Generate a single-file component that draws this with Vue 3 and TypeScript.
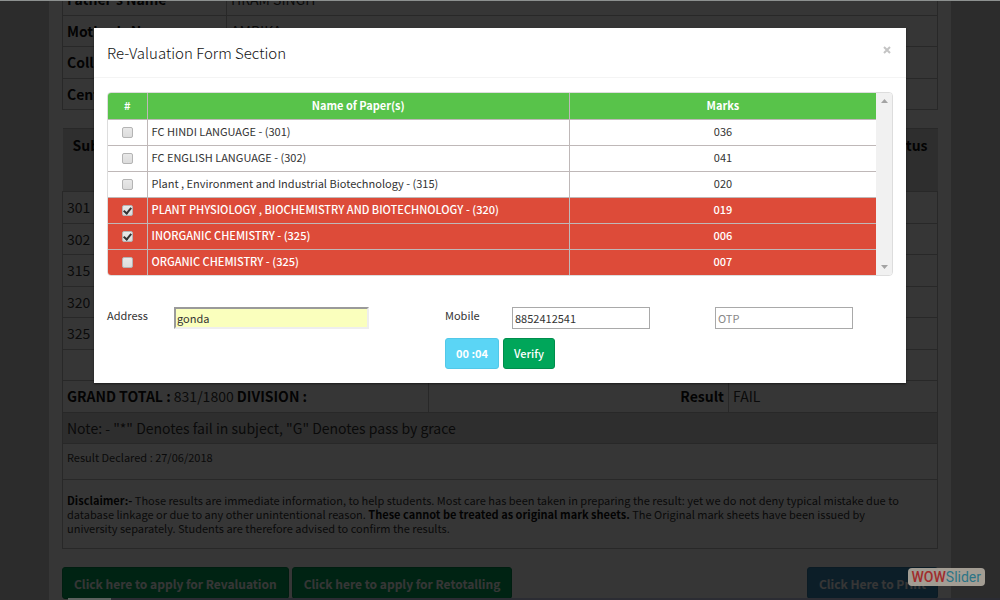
<script setup lang="ts">
import { reactive, ref } from 'vue'

interface Paper {
  name: string
  code: string
  marks: string
  failed: boolean
  picked: boolean
}

const details = [
  { label: "Father's Name", value: 'HRAM SINGH' },
  { label: "Mother's Name", value: 'AMBIKA' },
  { label: 'College Name', value: '' },
  { label: 'Center Name', value: '' },
]

const subjects = ['301', '302', '315', '320', '325', '']

const papers = reactive<Paper[]>([
  { name: 'FC HINDI LANGUAGE', code: '301', marks: '036', failed: false, picked: false },
  { name: 'FC ENGLISH LANGUAGE', code: '302', marks: '041', failed: false, picked: false },
  { name: 'Plant , Environment and Industrial Biotechnology', code: '315', marks: '020', failed: false, picked: false },
  { name: 'PLANT PHYSIOLOGY , BIOCHEMISTRY AND BIOTECHNOLOGY', code: '320', marks: '019', failed: true, picked: true },
  { name: 'INORGANIC CHEMISTRY', code: '325', marks: '006', failed: true, picked: true },
  { name: 'ORGANIC CHEMISTRY', code: '325', marks: '007', failed: true, picked: false },
])

const address = ref('gonda')
const mobile = ref('8852412541')
const otp = ref('')
</script>

<template>
  <div class="screen">
    <main class="page">
      <table class="sheet details">
        <tbody>
          <tr v-for="d in details" :key="d.label">
            <th scope="row">{{ d.label }}</th>
            <td>{{ d.value }}</td>
          </tr>
        </tbody>
      </table>

      <table class="sheet marks">
        <thead>
          <tr>
            <th class="subject">Subject</th>
            <th></th>
            <th></th>
            <th class="status">Status</th>
          </tr>
        </thead>
        <tbody>
          <tr v-for="(s, i) in subjects" :key="i">
            <td colspan="4">{{ s }}</td>
          </tr>
          <tr>
            <td colspan="2"><b>GRAND TOTAL :</b> 831/1800 <b>DIVISION :</b></td>
            <td class="right"><b>Result</b></td>
            <td>FAIL</td>
          </tr>
          <tr class="shade">
            <td colspan="4">Note: - "*" Denotes fail in subject, "G" Denotes pass by grace</td>
          </tr>
          <tr>
            <td colspan="4" class="declared">Result Declared : 27/06/2018</td>
          </tr>
          <tr>
            <td colspan="4" class="disclaimer">
              <b>Disclaimer:-</b> Those results are immediate information, to help students. Most care has been taken in
              preparing the result: yet we do not deny typical mistake due to database linkage or due to any other
              unintentional reason. <b>These cannot be treated as original mark sheets.</b> The Original mark sheets
              have been issued by university separately. Students are therefore advised to confirm the results.
            </td>
          </tr>
        </tbody>
      </table>

      <div class="actions">
        <button type="button" class="big green">Click here to apply for Revaluation</button>
        <button type="button" class="big green">Click here to apply for Retotalling</button>
        <button type="button" class="big blue">Click Here to Print</button>
      </div>
    </main>

    <div class="backdrop">
      <section class="modal" role="dialog" aria-labelledby="modal-title">
        <header class="modal-head">
          <h4 id="modal-title">Re-Valuation Form Section</h4>
          <button type="button" class="close" aria-label="Close">
            <svg viewBox="0 0 8 8" width="8" height="8"><path d="M1 1L7 7M7 1L1 7" /></svg>
          </button>
        </header>

        <div class="modal-body">
          <div class="scroller">
            <table class="papers">
              <colgroup>
                <col class="c-check" />
                <col class="c-name" />
                <col class="c-marks" />
              </colgroup>
              <thead>
                <tr>
                  <th>#</th>
                  <th>Name of Paper(s)</th>
                  <th>Marks</th>
                </tr>
              </thead>
              <tbody>
                <tr v-for="(p, i) in papers" :key="i" :class="{ failed: p.failed }">
                  <td class="center">
                    <input :id="'paper-' + i" v-model="p.picked" type="checkbox" />
                  </td>
                  <td>
                    <label :for="'paper-' + i">{{ p.name }} - ({{ p.code }})</label>
                  </td>
                  <td class="center">{{ p.marks }}</td>
                </tr>
              </tbody>
            </table>
            <div class="track" aria-hidden="true">
              <svg viewBox="0 0 7 4" width="7" height="4"><path d="M0 4L3.5 0L7 4Z" /></svg>
              <svg viewBox="0 0 7 4" width="7" height="4"><path d="M0 0L3.5 4L7 0Z" /></svg>
            </div>
          </div>

          <form class="fields" @submit.prevent>
            <label for="address">Address</label>
            <input id="address" v-model="address" class="address" type="text" />
            <label for="mobile">Mobile</label>
            <input id="mobile" v-model="mobile" type="text" />
            <input v-model="otp" type="text" placeholder="OTP" aria-label="OTP" />
          </form>

          <div class="verify">
            <button type="button" class="timer">00 :04</button>
            <button type="button" class="green">Verify</button>
          </div>
        </div>
      </section>
    </div>

    <a class="badge" href="#"><span class="wow">WOW</span><span class="slider">Slider</span></a>
    <div class="window-foot" aria-hidden="true"></div>
  </div>
</template>

<style>
html,
body {
  margin: 0;
  overflow: hidden;
}
</style>

<style scoped>
.screen {
  --sans: 'Noto Sans CJK SC', 'Noto Sans', sans-serif;
  position: relative;
  height: 100vh;
  overflow: hidden;
  background: #d0d0d0;
  font-family: var(--sans);
  font-size: 11px;
  color: #333;
}
.screen *,
.screen *::before {
  box-sizing: border-box;
}
button,
input {
  font-family: inherit;
  font-size: inherit;
  color: inherit;
}
.page {
  margin: 0 49px;
  padding: 0 13px 20px;
  background: #fff;
  overflow: hidden;
}
.sheet {
  width: 100%;
  border-collapse: collapse;
  table-layout: fixed;
  font-size: 14px;
  line-height: 20px;
}
.sheet th,
.sheet td {
  border: 1px solid #bbb;
  padding: 0 4px 1px;
  text-align: left;
}
.sheet tr {
  height: 32px;
}
.sheet tr:nth-child(even) {
  height: 31px;
}
.sheet th,
.sheet b {
  color: #111;
  font-weight: 700;
}
.details {
  margin-top: -17px;
  margin-bottom: 18px;
}
.details th {
  width: 164px;
}
.marks thead tr {
  height: 63px;
  background: #d9d9d9;
}
.marks thead th {
  border-left: 0;
  border-right: 0;
  padding: 6px 10px;
  vertical-align: top;
}
.marks .subject,
.marks th:nth-child(2) {
  width: 183px;
}
.marks .status {
  width: 209px;
  text-align: right;
}
.sheet .right {
  text-align: right;
}
.shade {
  background: #d9d9d9;
}
.sheet .declared {
  padding-top: 3px;
  padding-bottom: 12px;
  font-size: 11px;
}
.sheet .disclaimer {
  padding: 13px 24px 13px 4px;
  font-size: 11px;
  line-height: 14px;
}
.actions {
  display: flex;
  gap: 3px;
  padding-top: 18px;
}
.big {
  height: 32px;
  padding: 0 11px;
  border: 1px solid #008d4c;
  border-radius: 3px;
  font-size: 12px;
  font-weight: 700;
  color: #fff;
}
.green {
  background: #00a65a;
  border-color: #008d4c;
}
.blue {
  margin-left: auto;
  background: #3c8dbc;
  border-color: #367fa9;
}
.backdrop {
  position: absolute;
  inset: 0;
  padding: 27px 94px;
  background: rgba(0, 0, 0, 0.788);
  border-top: 1px solid #8d9190;
}
.modal {
  background: #fff;
  box-shadow: 0 1px 2px rgba(0, 0, 0, 0.5);
}
.modal-head {
  display: flex;
  align-items: flex-start;
  justify-content: space-between;
  height: 50px;
  padding: 12px 15px 0 13px;
  border-bottom: 1px solid #f4f4f4;
}
.modal-head h4 {
  margin: 0;
  font-size: 15px;
  line-height: 26px;
  font-weight: 300;
  color: #111;
}
.close {
  display: flex;
  margin-top: 6px;
  padding: 0;
  border: 0;
  background: none;
}
.close svg {
  stroke: #c4c4c4;
  stroke-width: 2;
  fill: none;
}
.modal-body {
  padding: 14px 13px;
}
.scroller {
  display: flex;
  border: 1px solid #ddd;
  border-radius: 4px;
  overflow: hidden;
}
.papers {
  flex: 1;
  border-collapse: collapse;
  table-layout: fixed;
  line-height: 16px;
}
.c-check {
  width: 39px;
}
.c-name {
  width: 55%;
}
.papers tr {
  height: 26px;
}
.papers th,
.papers td {
  padding: 0 4px 2px;
  border-top: 1px solid #bfb8b8;
  border-left: 1px solid #bfb8b8;
}
.papers th {
  background: #58c34a;
  border-top: 0;
  color: #fff;
  font-weight: 700;
}
.papers th:first-child,
.papers td:first-child {
  border-left: 0;
}
.papers .center {
  text-align: center;
}
.failed {
  background: #dd4b39;
  color: #fff;
  font-weight: 500;
}
.papers input {
  appearance: none;
  display: block;
  width: 11px;
  height: 11px;
  margin: 3px auto 0;
  border: 1px solid #b4b4b4;
  border-radius: 2px;
  background: linear-gradient(#e8e8e8, #dcdcdc);
}
.papers input:checked::before {
  content: '';
  display: block;
  width: 5px;
  height: 8px;
  margin-left: 2px;
  border: solid #333;
  border-width: 0 2px 2px 0;
  transform: rotate(40deg);
}
.track {
  display: flex;
  flex-direction: column;
  align-items: center;
  justify-content: space-between;
  width: 16px;
  padding: 6px 0;
  background: #f1f1f1;
}
.track svg {
  fill: #a3a3a3;
}
.fields {
  display: grid;
  grid-template-columns: 67fr 271fr 67fr 203fr 178fr;
  margin-top: 31px;
  line-height: 16px;
}
.fields input {
  width: 138px;
  height: 22px;
  padding: 0 2px;
  border: 1px solid #a9a9a9;
  background: #fff;
}
.fields .address {
  width: 195px;
  padding: 0 1px;
  border: 2px solid;
  border-color: #9a9a9a #eee #eee #9a9a9a;
  background: #faffbd;
}
.fields input::placeholder {
  color: #888;
}
.verify {
  display: flex;
  justify-content: center;
  gap: 4px;
  margin-top: 9px;
}
.verify button {
  height: 31px;
  padding: 0 10px 2px;
  border: 1px solid #008d4c;
  border-radius: 3px;
  color: #fff;
  font-size: 11px;
  font-weight: 500;
}
.verify .timer {
  background: #5bd5f5;
  border-color: #52c8e8;
  font-weight: 700;
}
.badge {
  position: absolute;
  right: 15px;
  bottom: 14px;
  display: flex;
  padding: 0 4px;
  border-radius: 4px;
  background: rgba(176, 170, 158, 0.9);
  font-family: Roboto, sans-serif;
  font-size: 14px;
  line-height: 18px;
  text-decoration: none;
}
.wow {
  color: #a02c2c;
  font-weight: 500;
}
.slider {
  color: #2c7486;
}
.window-foot {
  position: absolute;
  left: 0;
  right: 0;
  bottom: 0;
  height: 2px;
  background: linear-gradient(90deg, transparent 68px, #5c625f 68px, #5c625f 111px, #2b2c33 111px);
}
</style>
